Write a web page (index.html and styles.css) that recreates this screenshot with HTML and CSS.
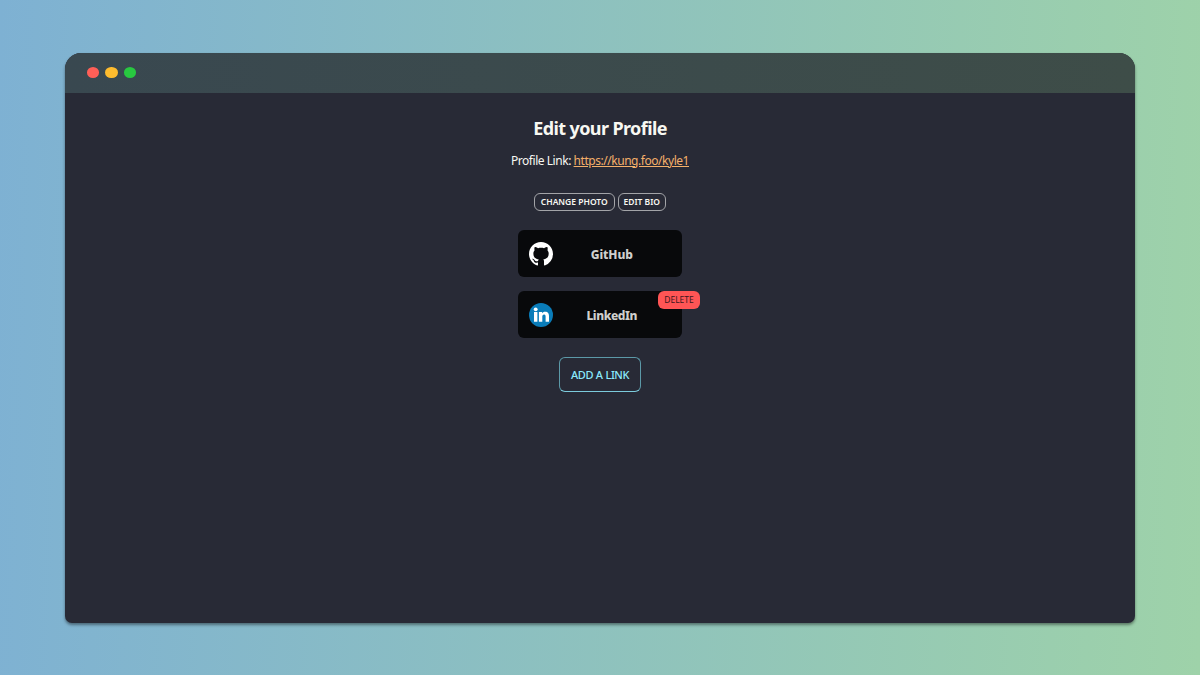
FILE: index.html
```html
<!DOCTYPE html>
<html lang="en">
<head>
<meta charset="utf-8">
<title>Edit your Profile</title>
<link rel="stylesheet" href="styles.css">
</head>
<body>
<div class="window">
  <header class="titlebar"><span class="dot red"></span><span class="dot yellow"></span><span class="dot green"></span></header>
  <main class="content">
    <h1 class="title"><span>Edit your Profile</span></h1>
    <p class="profile"><span class="label">Profile Link:</span> <a class="url" href="#">https://kung.foo/kyle1</a></p>
    <div class="actions">
      <button class="small photo"><span>CHANGE PHOTO</span></button>
      <button class="small bio"><span>EDIT BIO</span></button>
    </div>
    <div class="links">
      <div class="card">
        <svg class="icon" viewBox="0 0 16 16"><path fill="#fff" d="M8 0C3.58 0 0 3.58 0 8c0 3.54 2.29 6.53 5.47 7.59.4.07.55-.17.55-.38 0-.19-.01-.82-.01-1.49-2.01.37-2.53-.49-2.69-.94-.09-.23-.48-.94-.82-1.13-.28-.15-.68-.52-.01-.53.63-.01 1.08.58 1.23.82.72 1.21 1.87.87 2.33.66.07-.52.28-.87.51-1.07-1.78-.2-3.64-.89-3.64-3.95 0-.87.31-1.59.82-2.15-.08-.2-.36-1.02.08-2.12 0 0 .67-.21 2.2.82.64-.18 1.32-.27 2-.27s1.36.09 2 .27c1.53-1.04 2.2-.82 2.2-.82.44 1.1.16 1.92.08 2.12.51.56.82 1.27.82 2.15 0 3.07-1.87 3.75-3.65 3.95.29.25.54.73.54 1.48 0 1.07-.01 1.93-.01 2.2 0 .21.15.46.55.38A8.01 8.01 0 0 0 16 8c0-4.42-3.58-8-8-8z"/></svg>
        <span class="name github">GitHub</span>
      </div>
      <div class="card">
        <svg class="icon" viewBox="0 0 24 24"><circle cx="12" cy="12" r="12" fill="#0a7cb9"/><g fill="#fff"><circle cx="6.7" cy="6.3" r="1.9"/><path d="M5 9h3.4v9.7H5zM9.9 9h3.2v1.3c.5-.9 1.6-1.6 3-1.6 3 0 3.9 1.8 3.9 4.5v5.5h-3.4v-4.9c0-1.2-.1-2.3-1.5-2.3s-1.8 1.1-1.8 2.3v4.9H9.9z"/></g></svg>
        <span class="name linkedin">LinkedIn</span>
        <button class="delete"><span>DELETE</span></button>
      </div>
    </div>
    <button class="add"><span>ADD A LINK</span></button>
  </main>
</div>
</body>
</html>
```
FILE: styles.css
```css
* { box-sizing: border-box; }
body {
  margin: 0;
  height: 675px;
  padding: 52.5px 65px 0;
  overflow: hidden;
  background: linear-gradient(92deg, #7eb1d3, #9ed2a9);
  font-family: "Noto Sans", "Open Sans", sans-serif;
  color: #f8f8f2;
}
button { font-family: inherit; padding: 0; background: none; white-space: nowrap; }
.window {
  height: 570px;
  border-radius: 16px 16px 7px 7px;
  background: #282a36;
  box-shadow: 0 2px 3px rgba(0, 0, 0, .42);
}
.titlebar {
  height: 40px;
  padding: 0 22px;
  display: flex;
  align-items: center;
  gap: 6px;
  border-radius: 16px 16px 0 0;
  background: linear-gradient(90deg, #394850, #3e4d48);
}
.dot { width: 12.3px; height: 11px; border-radius: 50%; }
.red { background: #ff5f57; }
.yellow { background: #febc2e; }
.green { background: #28c840; }
.content { display: flex; flex-direction: column; align-items: center; }
.title { margin: 23px 0 0; font-size: 18px; line-height: 24px; font-weight: 700; letter-spacing: -.6px; }
.profile { margin: 13px 0 0; font-size: 12px; line-height: 16px; letter-spacing: -.46px; white-space: nowrap; }
.url { color: #f5b06a; text-decoration: underline; }
.actions { display: flex; gap: 3px; margin-top: 24.5px; }
.small { height: 18px; border: 1px solid #a3a4a8; border-radius: 6px; color: #f8f8f2; font-size: 8.5px; line-height: 16px; font-weight: 600; letter-spacing: 0; }
.photo { width: 80.5px; }
.bio { width: 48.5px; }
.links { display: flex; flex-direction: column; gap: 14px; margin-top: 19px; }
.card { position: relative; display: flex; align-items: center; width: 164.5px; height: 47px; padding-left: 11px; border-radius: 6px; background: #08090b; }
.icon { flex: none; width: 24px; height: 24px; }
.name { flex: 1; padding: 3px 11.5px 0 0; text-align: center; font-size: 12px; line-height: 18px; font-weight: 800; color: #d0d0ce; }
.github { letter-spacing: -.1px; }
.linkedin { letter-spacing: -.4px; }
.delete { position: absolute; top: 0; right: -18px; width: 42.5px; height: 18px; border: 0; border-radius: 6px; background: #ff5555; color: #3d1720; font-size: 8.5px; line-height: 18px; }
.add { width: 82px; height: 35px; margin-top: 19px; border: 1px solid #5c99a8; border-bottom-color: #7ccbdc; border-radius: 6px; color: #8be9fd; font-size: 11px; line-height: 33px; font-weight: 500; letter-spacing: -.46px; word-spacing: .5px; }
```
